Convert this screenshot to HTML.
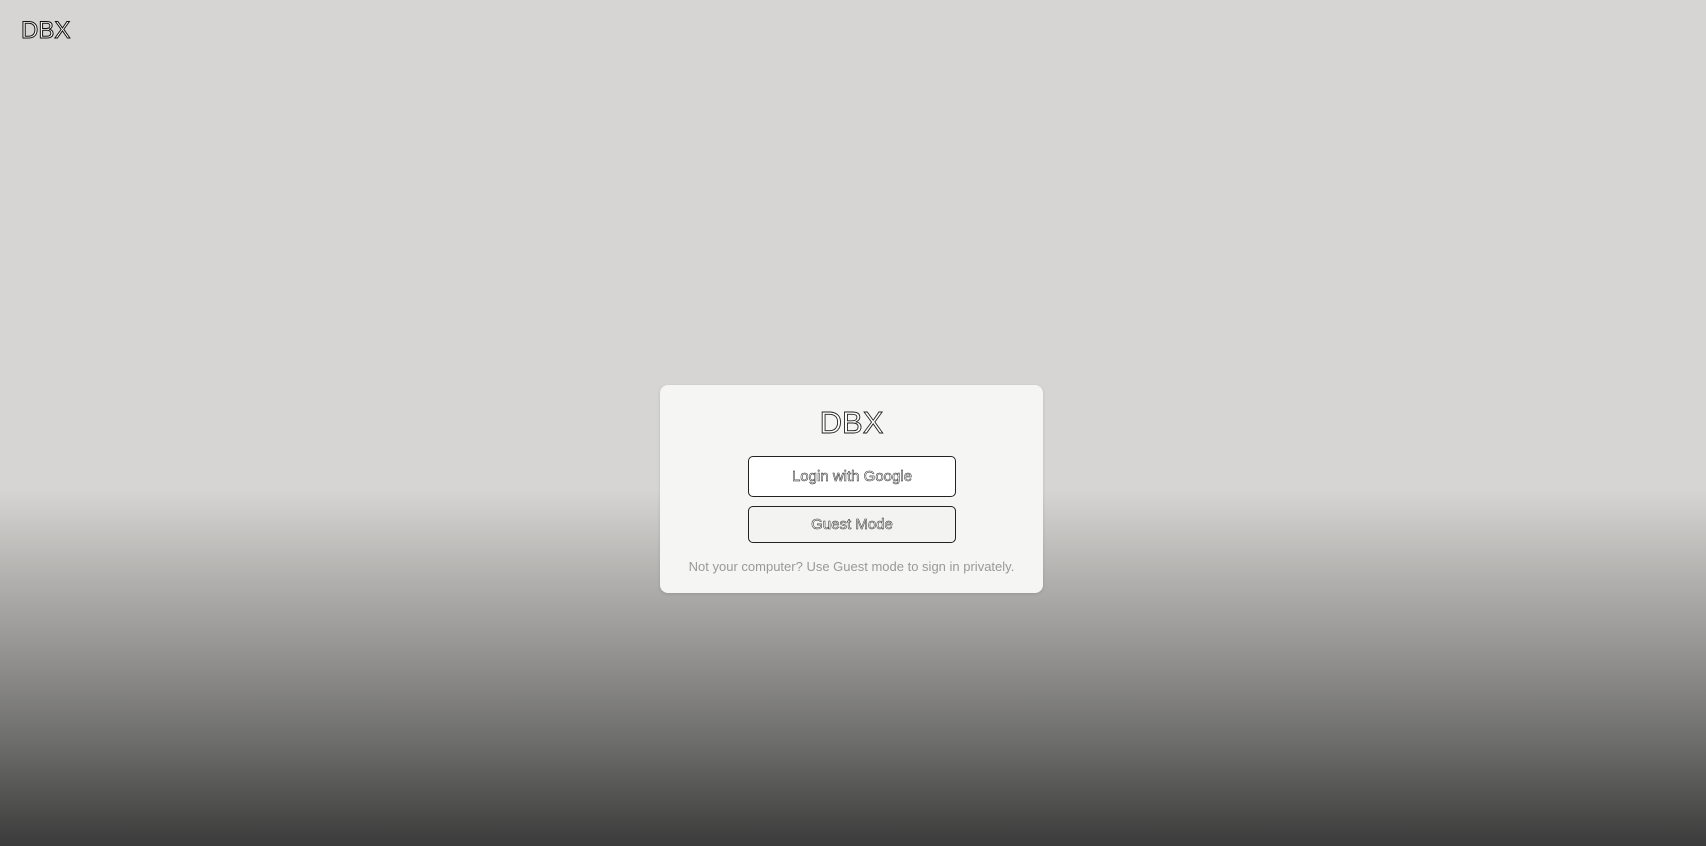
<!DOCTYPE html>
<html><head><meta charset="utf-8"><style>
html,body{margin:0;padding:0;width:1706px;height:846px;overflow:hidden}
body{background:linear-gradient(to bottom,#d6d5d3 0px,#d6d5d3 490px,#b9b8b5 560px,#959492 650px,#6e6e6c 740px,#3b3b3b 846px);font-family:"Liberation Sans",sans-serif;position:relative}
.out{color:#fff;-webkit-text-stroke:1px #111;}
.logo{position:absolute;left:21px;top:17px;font-size:24px}
.card{position:absolute;left:660px;top:385px;width:383px;height:208px;background:#f5f5f3;border-radius:8px;box-shadow:0 1px 3px rgba(0,0,0,.12)}
.t{position:absolute;left:0;right:0;top:20px;text-align:center;font-size:31px;-webkit-text-stroke:0.9px #222}
.btn{position:absolute;left:88px;width:208px;border:1px solid #222;border-radius:5px;text-align:center;font-size:15px;box-sizing:border-box;-webkit-text-stroke:0.5px #222;color:#fff}
.b1{top:71px;height:41px;line-height:39px;background:#fff}
.b2{top:121px;height:37px;line-height:35px;background:#f3f3f1}
.note{position:absolute;left:0;right:0;top:174px;text-align:center;font-size:13px;color:#999}
</style></head><body>
<div class="logo out">DBX</div>
<div class="card">
<div class="t out">DBX</div>
<div class="btn b1">Login with Google</div>
<div class="btn b2">Guest Mode</div>
<div class="note">Not your computer? Use Guest mode to sign in privately.</div>
</div>
</body></html>
